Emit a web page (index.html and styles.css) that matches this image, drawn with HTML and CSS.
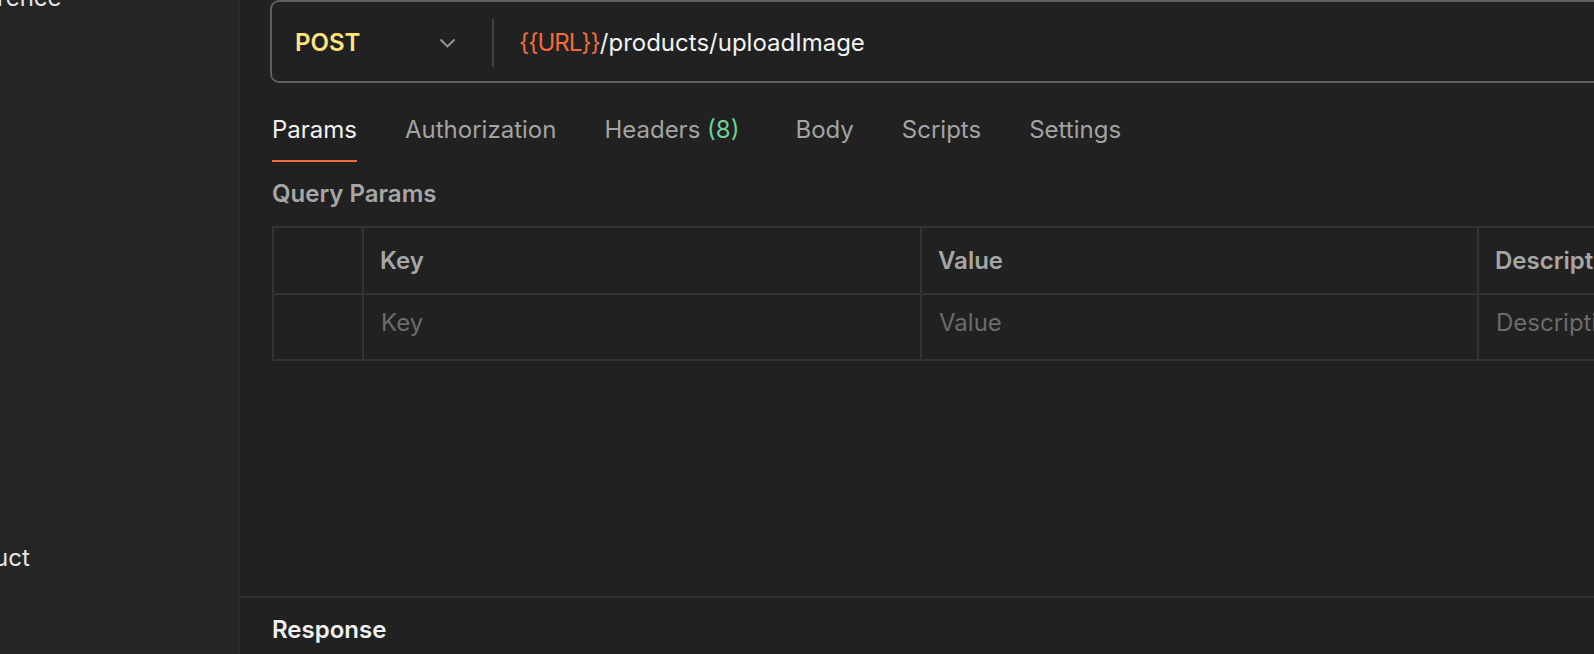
FILE: index.html
```html
<!DOCTYPE html>
<html lang="en">
<head>
<meta charset="utf-8">
<title>Postman request</title>
<link rel="stylesheet" href="styles.css">
</head>
<body>
<div class="app">
  <aside class="sidebar">
    <div class="side-item first">rence</div>
    <div class="side-item second">uct</div>
  </aside>
  <main class="main">
    <section class="request">
      <div class="urlbar">
        <div class="method">POST</div>
        <svg class="chevron" width="17" height="10" viewBox="0 0 17 10"><polyline points="1.5,1.5 8.5,8.5 15.5,1.5" fill="none" stroke="#9a9a9a" stroke-width="1.8"/></svg>
        <div class="divider"></div>
        <div class="url"><span class="var">{{URL}}</span>/products/uploadImage</div>
      </div>
      <nav class="tabs">
        <div class="tab active">Params</div>
        <div class="tab">Authorization</div>
        <div class="tab headers">Headers <span class="count">(8)</span></div>
        <div class="tab">Body</div>
        <div class="tab">Scripts</div>
        <div class="tab">Settings</div>
      </nav>
      <div class="section-title">Query Params</div>
      <div class="table">
        <div class="cell head"></div>
        <div class="cell head">Key</div>
        <div class="cell head">Value</div>
        <div class="cell head">Description</div>
        <div class="cell body"></div>
        <div class="cell body ph">Key</div>
        <div class="cell body ph">Value</div>
        <div class="cell body ph">Description</div>
      </div>
    </section>
    <section class="response">
      <div class="response-title">Response</div>
    </section>
  </main>
</div>
</body>
</html>
```

FILE: styles.css
```css
* { box-sizing: border-box; }
html, body {
  margin: 0;
  padding: 0;
  background: #212121;
  overflow: hidden;
}
body {
  font-family: Inter, "Noto Sans", sans-serif;
  font-size: 24px;
  line-height: 29px;
  color: #f0f0f0;
  width: 1594px;
  height: 654px;
}
.app {
  display: flex;
  height: 654px;
}
.sidebar {
  width: 240px;
  flex: 0 0 240px;
  background: #252525;
  border-right: 2px solid #2c2c2c;
  overflow: hidden;
  display: flex;
  flex-direction: column;
}
.side-item {
  color: #e6e6e6;
  white-space: nowrap;
}
.side-item.first {
  margin-top: -17px;
  margin-left: -3px;
}
.side-item.second {
  margin-top: 531px;
  margin-left: -6px;
}
.main {
  flex: 1;
  min-width: 0;
  display: flex;
  flex-direction: column;
  overflow: hidden;
}
.request {
  flex: 1;
  padding-left: 32px;
  overflow: hidden;
}
.urlbar {
  margin-left: -2px;
  width: 1500px;
  height: 83px;
  border: 2px solid #5f5f5f;
  border-radius: 9px;
  display: flex;
  align-items: center;
  padding-left: 23px;
  padding-top: 2px;
}
.method {
  width: 144px;
  font-weight: 600;
  color: #ffe47e;
}
.chevron {
  display: block;
  flex: 0 0 auto;
}
.divider {
  width: 2px;
  height: 48px;
  background: #424242;
  margin-left: 36px;
  margin-right: 25px;
}
.url {
  color: #f2f2f2;
  white-space: nowrap;
}
.url .var {
  color: #f26b3a;
  letter-spacing: -1px;
}
.tabs {
  display: flex;
  gap: 48px;
  margin-top: 32px;
}
.tab {
  color: #a3a3a3;
  padding-bottom: 16px;
  border-bottom: 2px solid transparent;
  white-space: nowrap;
}
.tab.active {
  color: #f2f2f2;
  border-bottom-color: #f26b3a;
}
.tab.headers {
  padding-right: 8px;
}
.count {
  color: #6fcf97;
}
.section-title {
  margin-top: 17px;
  font-weight: 600;
  color: #a6a6a6;
}
.table {
  margin-top: 18px;
  width: 1500px;
  display: grid;
  grid-template-columns: 90px 558px 557px 1fr;
  border-top: 2px solid #333333;
  border-left: 2px solid #333333;
}
.cell {
  border-right: 2px solid #333333;
  border-bottom: 2px solid #333333;
  white-space: nowrap;
  overflow: hidden;
}
.cell.head {
  height: 67px;
  padding: 18px 0 0 16px;
  font-weight: 600;
  color: #a6a6a6;
}
.cell.body {
  height: 66px;
  padding: 13px 0 0 17px;
}
.cell.ph {
  color: #6b6b6b;
}
.response {
  flex: 0 0 58px;
  border-top: 2px solid #2e2e2e;
  padding: 17px 0 0 32px;
}
.response-title {
  font-weight: 600;
  color: #f0f0f0;
}
```
